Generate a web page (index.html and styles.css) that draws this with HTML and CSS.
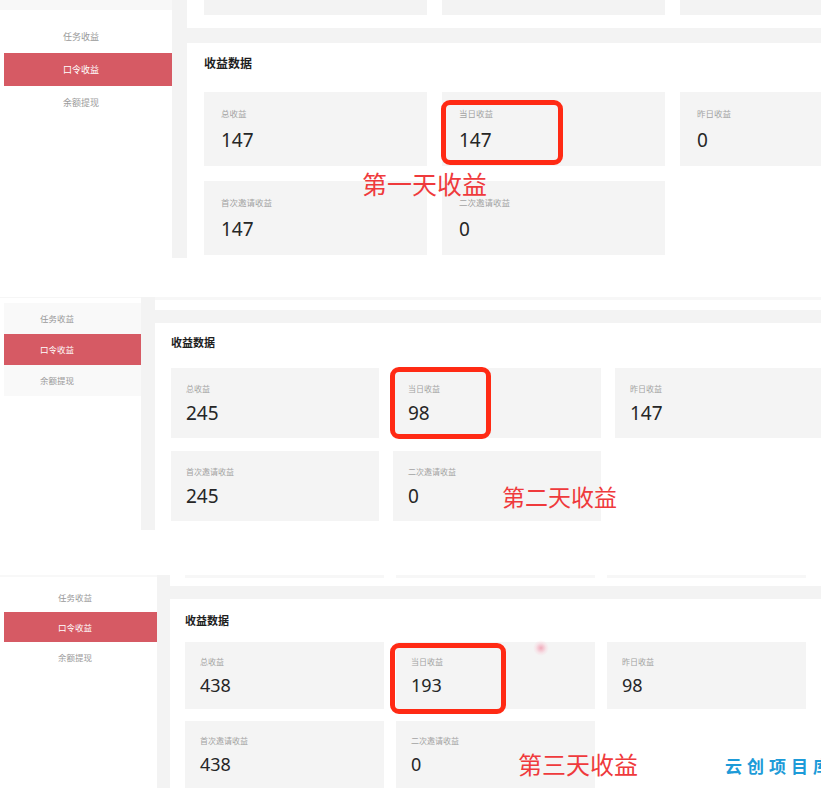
FILE: index.html
```html
<!DOCTYPE html>
<html>
<head>
    <meta charset="utf-8">
    <title>收益数据</title>
    <link rel="stylesheet" href="styles.css">
</head>
<body>
    <!-- 第一天 -->
    <div class="shot shot-one">
        <div class="side">
            <div class="menu">
                <div class="menu-item">任务收益</div>
                <div class="menu-item active">口令收益</div>
                <div class="menu-item">余额提现</div>
            </div>
        </div>
        <div class="main">
            <div class="strip">
                <div class="strip-box"></div>
                <div class="strip-box"></div>
                <div class="strip-box"></div>
            </div>
            <div class="card">
                <div class="card-title">收益数据</div>
                <div class="stats">
                    <div class="stat"><div class="stat-label">总收益</div><div class="stat-value">147</div></div>
                    <div class="stat"><div class="stat-label">当日收益</div><div class="stat-value">147</div></div>
                    <div class="stat"><div class="stat-label">昨日收益</div><div class="stat-value">0</div></div>
                    <div class="stat"><div class="stat-label">首次邀请收益</div><div class="stat-value">147</div></div>
                    <div class="stat"><div class="stat-label">二次邀请收益</div><div class="stat-value">0</div></div>
                </div>
            </div>
        </div>
        <div class="mark"></div>
        <div class="note">第一天收益</div>
    </div>

    <!-- 第二天 -->
    <div class="shot shot-two">
        <div class="side">
            <div class="menu">
                <div class="menu-item">任务收益</div>
                <div class="menu-item active">口令收益</div>
                <div class="menu-item">余额提现</div>
            </div>
        </div>
        <div class="main">
            <div class="strip">
                <div class="strip-box"></div>
                <div class="strip-box"></div>
                <div class="strip-box"></div>
            </div>
            <div class="card">
                <div class="card-title">收益数据</div>
                <div class="stats">
                    <div class="stat"><div class="stat-label">总收益</div><div class="stat-value">245</div></div>
                    <div class="stat"><div class="stat-label">当日收益</div><div class="stat-value">98</div></div>
                    <div class="stat"><div class="stat-label">昨日收益</div><div class="stat-value">147</div></div>
                    <div class="stat"><div class="stat-label">首次邀请收益</div><div class="stat-value">245</div></div>
                    <div class="stat"><div class="stat-label">二次邀请收益</div><div class="stat-value">0</div></div>
                </div>
            </div>
        </div>
        <div class="mark"></div>
        <div class="note">第二天收益</div>
    </div>

    <!-- 第三天 -->
    <div class="shot shot-three">
        <div class="side">
            <div class="menu">
                <div class="menu-item">任务收益</div>
                <div class="menu-item active">口令收益</div>
                <div class="menu-item">余额提现</div>
            </div>
        </div>
        <div class="main">
            <div class="strip">
                <div class="strip-box"></div>
                <div class="strip-box"></div>
                <div class="strip-box"></div>
            </div>
            <div class="card">
                <div class="card-title">收益数据</div>
                <div class="stats">
                    <div class="stat"><div class="stat-label">总收益</div><div class="stat-value">438</div></div>
                    <div class="stat"><div class="stat-label">当日收益</div><div class="stat-value">193</div></div>
                    <div class="stat"><div class="stat-label">昨日收益</div><div class="stat-value">98</div></div>
                    <div class="stat"><div class="stat-label">首次邀请收益</div><div class="stat-value">438</div></div>
                    <div class="stat"><div class="stat-label">二次邀请收益</div><div class="stat-value">0</div></div>
                </div>
            </div>
        </div>
        <div class="mark"></div>
        <div class="dot"></div>
        <div class="note">第三天收益</div>
        <div class="watermark">云创项目库</div>
    </div>
</body>
</html>
```

FILE: styles.css
```css
* {
    margin: 0;
    padding: 0;
    box-sizing: border-box;
}

body {
    background: #fff;
    width: 824px;
    height: 788px;
    overflow: hidden;
    font-family: "Noto Sans CJK SC", "Noto Sans", sans-serif;
}

/* one screenshot */
.shot {
    position: relative;
    display: flex;
    width: 821px;
    overflow: hidden;
    background: #f8f8f8;
}

.side {
    background: #fff;
    flex-shrink: 0;
}

.menu-item {
    color: #9a9a9a;
    white-space: nowrap;
}

.menu-item.active {
    background: #d65a64;
    color: #fff;
}

.main {
    flex: 1;
    display: flex;
    flex-direction: column;
    background: #f3f3f3;
    min-width: 0;
}

.strip {
    display: flex;
    background: #fff;
    overflow: hidden;
}

.strip-box {
    background: #f3f3f3;
    flex-shrink: 0;
}

.card {
    flex: 1;
    background: #fff;
}

.card-title {
    font-weight: bold;
    color: #1e1e1e;
}

.stats {
    display: grid;
}

.stat {
    background: #f4f4f4;
}

.stat-label {
    color: #a3a3a3;
    white-space: nowrap;
}

.stat-value {
    font-family: "Noto Sans", sans-serif;
    color: #262626;
}

.mark {
    position: absolute;
    border: 5px solid #ff2a14;
    border-radius: 9px;
}

.note {
    position: absolute;
    color: #ef3a3c;
    white-space: nowrap;
    line-height: 1;
}

.dot {
    position: absolute;
    left: 533px;
    top: 65px;
    width: 16px;
    height: 16px;
    border-radius: 50%;
    background: radial-gradient(circle, rgba(240, 110, 140, 0.55) 0, rgba(250, 190, 205, 0.3) 45%, rgba(255, 255, 255, 0) 70%);
}

.watermark {
    position: absolute;
    left: 725px;
    top: 181px;
    font-size: 17px;
    line-height: 20px;
    font-weight: bold;
    letter-spacing: 5px;
    color: #1d9bd8;
    white-space: nowrap;
}

/* day one */
.shot-one {
    height: 258px;
    margin-bottom: 39px;
}

.shot-one .side {
    width: 172px;
    margin-top: 10px;
    padding: 10px 0 0 4px;
}

.shot-one .menu-item {
    height: 33px;
    line-height: 33px;
    font-size: 9px;
    padding-left: 59px;
}

.shot-one .main {
    padding-left: 15px;
    gap: 15px;
}

.shot-one .strip {
    height: 28px;
    gap: 15px;
    padding-left: 17px;
}

.shot-one .strip-box {
    width: 223px;
    height: 15px;
}

.shot-one .card {
    padding: 13px 0 0 17px;
}

.shot-one .card-title {
    font-size: 12px;
    line-height: 14px;
}

.shot-one .stats {
    margin-top: 22px;
    grid-template-columns: 223px 223px 223px;
    column-gap: 15px;
    row-gap: 15px;
}

.shot-one .stat {
    height: 74px;
    padding: 15px 0 0 17px;
}

.shot-one .stat-label {
    font-size: 8.5px;
    line-height: 12px;
}

.shot-one .stat-value {
    margin-top: 9px;
    font-size: 19px;
    line-height: 24px;
}

.shot-one .mark {
    left: 441px;
    top: 100px;
    width: 122px;
    height: 65px;
}

.shot-one .note {
    left: 362px;
    top: 171px;
    font-size: 25px;
}

/* day two */
.shot-two {
    height: 233px;
    margin-bottom: 45px;
    background: #fff;
}

.shot-two .side {
    width: 141px;
    padding: 5px 0 0 4px;
    border-top: 1px solid #f6f6f6;
}

.shot-two .menu {
    background: #f9f9f9;
}

.shot-two .menu-item {
    height: 31px;
    line-height: 31px;
    font-size: 8.5px;
    padding-left: 36px;
}

.shot-two .main {
    padding-left: 14px;
    gap: 13px;
}

.shot-two .strip {
    height: 13px;
    gap: 0;
    padding-left: 0;
}

.shot-two .strip-box {
    width: 222px;
    height: 3px;
    background: #f7f7f7;
}

.shot-two .card {
    padding: 12px 0 0 16px;
}

.shot-two .card-title {
    font-size: 11px;
    line-height: 14px;
}

.shot-two .stats {
    margin-top: 19px;
    grid-template-columns: 208px 208px 208px;
    column-gap: 14px;
    row-gap: 13px;
}

.shot-two .stat {
    height: 70px;
    padding: 15px 0 0 15px;
}

.shot-two .stat-label {
    font-size: 8px;
    line-height: 12px;
}

.shot-two .stat-value {
    margin-top: 6px;
    font-size: 19px;
    line-height: 24px;
}

.shot-two .mark {
    left: 390px;
    top: 70px;
    width: 101px;
    height: 72px;
}

.shot-two .note {
    left: 502px;
    top: 188px;
    font-size: 23px;
}

/* day three */
.shot-three {
    height: 213px;
}

.shot-three .side {
    width: 157px;
    margin-top: 2px;
    padding: 5px 0 0 4px;
}

.shot-three .menu-item {
    height: 30px;
    line-height: 30px;
    font-size: 8.5px;
    padding-left: 54px;
}

.shot-three .main {
    padding-left: 13px;
    gap: 13px;
}

.shot-three .strip {
    height: 15px;
    gap: 12px;
    padding-left: 15px;
}

.shot-three .strip-box {
    width: 199px;
    height: 3px;
    background: #f7f7f7;
}

.shot-three .card {
    padding: 14px 0 0 15px;
}

.shot-three .card-title {
    font-size: 11px;
    line-height: 14px;
}

.shot-three .stats {
    margin-top: 15px;
    grid-template-columns: 199px 199px 199px;
    column-gap: 12px;
    row-gap: 12px;
}

.shot-three .stat {
    height: 67px;
    padding: 14px 0 0 15px;
}

.shot-three .stat-label {
    font-size: 8px;
    line-height: 12px;
}

.shot-three .stat-value {
    margin-top: 6px;
    font-size: 18px;
    line-height: 22px;
}

.shot-three .mark {
    left: 390px;
    top: 68px;
    width: 116px;
    height: 71px;
}

.shot-three .note {
    left: 518px;
    top: 177px;
    font-size: 24px;
}
```
